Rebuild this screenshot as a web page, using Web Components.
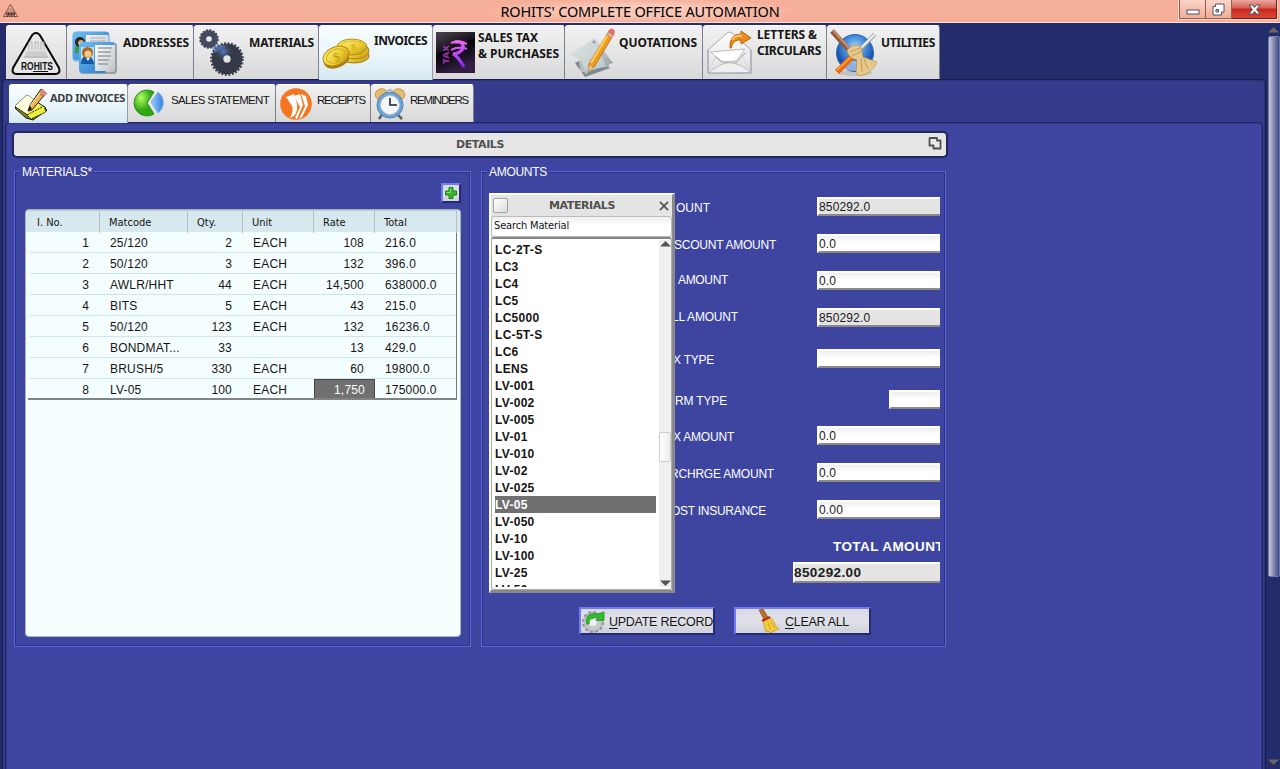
<!DOCTYPE html>
<html lang="en"><head><meta charset="utf-8"><title>ROHITS' COMPLETE OFFICE AUTOMATION</title>
<style>html,body{margin:0;width:1280px;height:769px;overflow:hidden;background:#252c6c}*{box-sizing:border-box}</style></head>
<body><office-app></office-app>
<script>
const ARIAL='"Liberation Sans",Arial,sans-serif', NOTO='"Noto Sans","Open Sans",sans-serif', VERD='"DejaVu Sans",sans-serif', COND='"DejaVu Sans Condensed","DejaVu Sans",sans-serif';
function define(name,css,html,init){
  customElements.define(name,class extends HTMLElement{
    connectedCallback(){
      if(!this.shadowRoot){
        const r=this.attachShadow({mode:'open'});
        r.innerHTML='<style>*{box-sizing:border-box}:host{display:block;box-sizing:border-box}'+css+'</style>'+(typeof html==='function'?html(this):html);
      }
      if(init)init(this);
    }
  });
}
/* A one-line label whose tracking adapts to the width attribute. */
define('ui-text',':host{white-space:pre;flex:none;height:16px;line-height:16px}span{display:inline-block}i{font-style:normal;text-decoration:underline;text-underline-offset:2px}',
 el=>{const t=el.getAttribute('text');return '<span>'+(el.hasAttribute('mnemonic')?'<i>'+t[0]+'</i>'+t.slice(1):t.replace(/&/g,'&amp;'))+'</span>'},
 el=>{
  const f={a:ARIAL,n:NOTO,v:VERD,c:COND}[el.getAttribute('f')||'a'];
  el.style.font=(el.getAttribute('b')||'400')+' '+(el.getAttribute('s')||12)+'px/16px '+f;
  const s=el.shadowRoot.querySelector('span'),w=+el.getAttribute('w');
  if(w){el.style.width=w+'px';const n=el.getAttribute('text').length;s.style.letterSpacing=((w-s.getBoundingClientRect().width)/n).toFixed(3)+'px';}
 });
const ICONS={
logo:[60,54,`<path d="M30 7Q33 7 35 11L53 42Q55 48 49 48H11Q5 48 7 42L25 11Q27 7 30 7Z" fill="#e6e6e6" stroke="#080808" stroke-width="2"/><path d="M21 25H39L43 32H17Z" fill="#cdcdcd"/><path d="M23 24V16H26V24M29 24V16H32V24M35 24V16H38V24" fill="none" stroke="#b4b4b4"/><path d="M18 31H42" stroke="#b5b5b5"/><path d="M27 45.500H42" stroke="#111"/><text x="15" y="44" font-family="Liberation Sans" font-weight="bold" font-size="10.500" textLength="32" lengthAdjust="spacingAndGlyphs" fill="#111">ROHITS</text>`],
mini:[17,16,`<path d="M8.500 1.500L15.500 13.500H1.500Z" fill="#f0b49d" stroke="#57362e" stroke-dasharray="2 .6"/><path d="M6 6H11M5 8H12" stroke="#a9796c"/><path d="M4 11H13" stroke="#422" stroke-width="3"/><path d="M5 10V12M8 10V12M11 10V12" stroke="#e8ae9b" stroke-width=".8"/>`],
cards:[48,48,`<defs><linearGradient id="g" x2="1" y2="1"><stop stop-color="#70bdf2"/><stop offset="1" stop-color="#2476cf"/></linearGradient><linearGradient id="h" x2="1" y2="1"><stop stop-color="#fff"/><stop offset="1" stop-color="#bfc3c8"/></linearGradient></defs><rect x="2" y="4" width="36" height="29" rx="3" fill="url(#h)" stroke="#5aa3de"/><path d="M2 8Q2 4 6 4H35Q38 4 38 7H15V32H5Q2 32 2 29Z" fill="url(#g)"/><path d="M4 20Q8 9 13 19V25H4Z" fill="#3b9c45"/><circle cx="9" cy="14" r="5" fill="#282522"/><circle cx="10" cy="15" r="3" fill="#dfaa62"/><path d="M19 10H34M19 13H34" stroke="#aab"/><rect x="9" y="15" width="37" height="31" rx="3" fill="#9b9fa4"/><rect x="8" y="14" width="36" height="30" rx="3" fill="url(#h)"/><path d="M8 17Q8 14 11 14H42Q44 14 44 17H24V41H36L34 45H11Q8 45 8 41Z" fill="url(#g)"/><path d="M24 17H43V36L36 43H24Z" fill="url(#h)"/><rect x="10" y="19" width="13" height="17" fill="#b9dcf2"/><path d="M10 36Q10 28 16 28T23 36Z" fill="#155ca8"/><path d="M14 28L17 33 20 28" fill="#fff"/><circle cx="16.500" cy="24.500" r="5.500" fill="#ad6a1c"/><circle cx="17" cy="26" r="3.500" fill="#f6c789"/><path d="M27 20H41M27 24H40M27 28H40M27 32H38M27 36H37" stroke="#9a9da0" stroke-width="1.600"/>`],
gears:[48,50,`<defs><radialGradient id="b" cx=".3" cy=".1"><stop stop-color="#5577c8"/><stop offset=".6" stop-color="#3e4557"/><stop offset="1" stop-color="#353a48"/></radialGradient></defs><circle cx="10" cy="11" r="8.500" fill="none" stroke="#3d4252" stroke-width="2.500" stroke-dasharray="2 1.340"/><circle cx="10" cy="11" r="5.800" fill="none" stroke="#454b5e" stroke-width="6"/><circle cx="28" cy="31" r="15.500" fill="none" stroke="#3d4250" stroke-width="2.600" stroke-dasharray="2 1.480"/><circle cx="28" cy="31" r="9.400" fill="none" stroke="url(#b)" stroke-width="11.500"/><path d="M13 20Q20 15 27 18L16 25Z" fill="#5b7cc6" opacity=".65"/>`],
coins:[50,34,`<defs><linearGradient id="c" x2="1" y2="1"><stop stop-color="#fff67b"/><stop offset=".6" stop-color="#edc92c"/><stop offset="1" stop-color="#b88d17"/></linearGradient></defs><path d="M18 13V21Q31 31 48 21V12Z" fill="#c29518"/><ellipse cx="33" cy="19" rx="15" ry="7" fill="url(#c)" stroke="#a87c12"/><ellipse cx="34" cy="14" rx="14" ry="8" fill="url(#c)" stroke="#ad8419"/><ellipse cx="31" cy="10" rx="15" ry="8" fill="url(#c)" stroke="#b18b1b"/><ellipse cx="31" cy="9.500" rx="11.500" ry="5.500" fill="none" stroke="#d9b82a"/><path d="M3 21Q1 28 7 31Q19 34 28 23V16Z" fill="#a97b13"/><ellipse cx="15" cy="19" rx="13.500" ry="9" transform="rotate(-24 15 19)" fill="url(#c)" stroke="#b68b19"/><ellipse cx="15" cy="19" rx="10" ry="6.500" transform="rotate(-24 15 19)" fill="none" stroke="#d5b123"/><text x="12" y="24" font-family="Liberation Serif" font-size="12" fill="#b99018" transform="rotate(-20 15 19)">$</text><text x="30" y="13" font-family="Liberation Serif" font-size="9" fill="#c6a226">$</text>`],
tax:[40,42,`<defs><linearGradient id="t" x2=".4" y2="1"><stop stop-color="#4b474f"/><stop offset=".45" stop-color="#19131f"/><stop offset=".5" stop-color="#050307"/><stop offset="1" stop-color="#351f43"/></linearGradient><linearGradient id="p" gradientUnits="userSpaceOnUse" x1="20" y1="8" x2="26" y2="36"><stop stop-color="#f56af3"/><stop offset="1" stop-color="#7a24ef"/></linearGradient></defs><path d="M0 0H39V41H0Z" fill="url(#t)"/><path d="M15 11Q24 8 31 12M15 18Q23 14 31 17" fill="none" stroke="url(#p)" stroke-width="2.200"/><path d="M19 10Q28 9 27 15Q26 21 17 22Q22 24 28 35" fill="none" stroke="url(#p)" stroke-width="3.400"/><text x="-32" y="13" transform="rotate(-90)" font-family="Noto Sans" font-size="9" textLength="19" lengthAdjust="spacingAndGlyphs" font-weight="bold" fill="#a535b4">TAX</text>`],
quote:[50,50,`<defs><linearGradient id="q" x2="1" y2="1"><stop stop-color="#f5f7f8"/><stop offset="1" stop-color="#8f9c9f"/></linearGradient></defs><path d="M33 22L46 35 39 36 43 40 18 49 8 35Z" fill="#7d8a8e"/><path d="M2 26L28 10 44 33 41 39Q24 40 18 47Q18 31 2 26Z" fill="url(#q)"/><path d="M2 26Q14 28 13 45L39 38 28 12Z" fill="#d2dada" opacity=".65"/><path d="M42 3L47 6 27 39 21 43 22 36Z" fill="#f39a1a" stroke="#a86519" stroke-width=".8"/><path d="M40 8L24 35" stroke="#ffd05c" stroke-width="2"/><path d="M42 2Q46-2 48 4L46 8 40 5Z" fill="#ed6e67"/><path d="M40 5L46 9" stroke="#bcc4c5" stroke-width="2"/><path d="M22 37L21 43 26 40Z" fill="#e8c58e"/><circle cx="27" cy="14" r="1.500" fill="#8f9da8"/>`],
mail:[46,46,`<defs><linearGradient id="m" x2="0" y2="1"><stop stop-color="#fff"/><stop offset="1" stop-color="#dcdee0"/></linearGradient></defs><path d="M1 20L20 3Q22 1 25 3L44 20V43H1Z" fill="url(#m)" stroke="#a5a9ae"/><path d="M1 21L10 25 1 42M44 20L35 26 44 42" fill="none" stroke="#d5d8db"/><path d="M4 22L38 19 29 31 14 32Z" fill="#fff" stroke="#bbb"/><path d="M8 26L17 33H29L38 23" fill="none" stroke="#a5a9ae"/><path d="M2 43Q22 23 43 42" fill="#eee" stroke="#bbb"/><path d="M1 20V43H44V20" fill="none" stroke="#a5a9ae"/><path d="M23 18Q22 4 34 4V1L44 8 34 14V10Q26 9 24 18Z" fill="#ee8b1b" stroke="#bd6308"/><path d="M25 10Q28 5 35 6" stroke="#ffc46b" fill="none" stroke-width="2"/>`],
utils:[48,48,`<defs><radialGradient id="u" cx=".5" cy=".35"><stop stop-color="#a8d6ff"/><stop offset=".55" stop-color="#4d92dd"/><stop offset="1" stop-color="#1b54b0"/></radialGradient></defs><ellipse cx="25" cy="45" rx="17" ry="3" fill="#aaa" opacity=".5"/><circle cx="25" cy="25" r="18.500" fill="url(#u)" stroke="#2b67b8"/><ellipse cx="25" cy="38" rx="14" ry="5" fill="#dceeff" opacity=".6"/><path d="M45 6L29 23" stroke="#99a0a9" stroke-width="4"/><path d="M46 5L29 22" stroke="#f1f2f4" stroke-width="2"/><path d="M22 29L7 44" stroke="#e56a10" stroke-width="6"/><path d="M21 29L7 42" stroke="#ff9b3a" stroke-width="2"/><path d="M2 3L20 23" stroke="#8e5a42" stroke-width="5"/><path d="M3 2L19 20" stroke="#c18c6f" stroke-width="2.500"/><path d="M17 22Q25 14 31 19L33 29 47 34Q42 46 29 48L26 45 27 32Q18 30 17 22Z" fill="#e7c98c" stroke="#b5904b" stroke-width=".7"/><path d="M31 30L32 44M34 31L38 41M20 24L30 20M22 28L32 23" stroke="#c29c5c"/>`],
add:[34,34,`<path d="M1 20L13 8 33 22 19 32 12 30Z" fill="#827f10" stroke="#16180a"/><path d="M1 18L13 7 32 20 18 30Z" fill="#f3ef58" stroke="#111"/><path d="M1 18L13 7 21 12 13 26Z" fill="#fffde0"/><path d="M13 27L30 18 32 24 17 31Z" fill="#eff03b" stroke="#222" stroke-dasharray="2 1"/><path d="M27 1L32 5 18 22 14 23 16 17Z" fill="#eeb556" stroke="#27251b"/><path d="M27 2L32 7" stroke="#d98a80" stroke-width="4"/><path d="M25 5L30 9" stroke="#8e4a3a" stroke-width="1"/><path d="M26 5L16 18" stroke="#fff0a6"/><path d="M14 23L16 18 18 21Z" fill="#111"/>`],
pie:[32,28,`<defs><radialGradient id="i" cx=".35" cy=".3"><stop stop-color="#b4ff65"/><stop offset="1" stop-color="#31a712"/></radialGradient><linearGradient id="j"><stop stop-color="#9bcdff"/><stop offset="1" stop-color="#377ee0"/></linearGradient></defs><path d="M14 14L21 3A13 13 0 1 0 21 25Z" fill="url(#i)" stroke="#278b16"/><path d="M18 13L25 3A13 13 0 0 1 25 24Z" fill="url(#j)" stroke="#7fb4e8"/>`],
receipt:[32,32,`<circle cx="16" cy="16" r="15.800" fill="#f47621"/><path d="M6 9L14 6 17 16Q18 23 14 28L10 30Q14 22 12 18ZM14 8L20 6 23 17 17 31 15 30 20 19ZM21 6L26 8 28 17 22 29 19 31 25 18Z" fill="#fff"/>`],
clock:[32,32,`<path d="M9 25L5 31M22 25L28 31" stroke="#5b625f" stroke-width="2.500"/><ellipse cx="7" cy="6" rx="6" ry="5" transform="rotate(-25 7 6)" fill="#e5bd6c" stroke="#c39a4c"/><ellipse cx="25" cy="6" rx="6" ry="5" transform="rotate(25 25 6)" fill="#e5bd6c" stroke="#c39a4c"/><path d="M13 3Q16 0 19 3" fill="none" stroke="#888"/><circle cx="16" cy="17" r="13" fill="#6ea3d3" stroke="#5383b3"/><circle cx="16" cy="17" r="9.500" fill="#f4f7f9" stroke="#b2c6d6"/><path d="M16 10V17H23" fill="none" stroke="#222" stroke-width="1.600"/>`],
plus:[12,12,`<path d="M4 .5H8V4H11.500V8H8V11.500H4V8H.5V4H4Z" fill="#35b929" stroke="#14811a"/><path d="M5.500 1.500V5.500H1.500" fill="none" stroke="#80e36b"/>`],
pop:[14,13,`<path d="M2 1H9V3.500H12.500V11.500H5.500V8.500H1.500V1.500Z" fill="#e8e8e8" stroke="#505050" stroke-width="1.800" stroke-linejoin="round"/>`],
update:[26,26,`<circle cx="12.500" cy="13.500" r="10" fill="none" stroke="#8e9195" stroke-width="3" stroke-dasharray="3 2.236"/><circle cx="12.500" cy="13.500" r="7" fill="none" stroke="#c6c8cc" stroke-width="5"/><circle cx="12.500" cy="13.500" r="9.500" fill="none" stroke="#a3a5a9" stroke-width=".8"/><path d="M6 16Q3 3 18 5L24 3V12H15L18 9Q10 8 9 15Z" fill="#34b82e" stroke="#148c1d" stroke-width=".7"/><circle cx="12.500" cy="14" r="3.500" fill="#f0f0f4"/>`],
broom:[22,24,`<path d="M1 1L5 0 11 10 7 12Z" fill="#b97422" stroke="#78430d" stroke-width=".6"/><path d="M5 12L12 8 16 13Q17 17 21 20Q18 20 17 22Q15 21 13 24L10 22 8 23Z" fill="#f4cd3d" stroke="#bd8d16" stroke-width=".7"/><path d="M4 12L12 8" stroke="#c12a25" stroke-width="2.500"/><path d="M10 14L13 21M13 13L17 19" stroke="#cda024"/>`],
x:[11,11,`<path d="M1 1L10 10M10 1L1 10" stroke="#505050" stroke-width="1.800"/>`],
up:[11,7,`<path d="M0 6.500L5.500 1 11 6.500Z" fill="currentColor"/>`],
down:[11,7,`<path d="M0 .5L5.500 6 11 .5Z" fill="currentColor"/>`],
min:[14,7,`<rect x="1" y="1" width="12" height="4" fill="#fff" stroke="#505266"/>`],
restore:[13,13,`<path d="M3.500 1H12V9H9.500V12H1V3.500H3.500Z" fill="#fff" stroke="#505266"/><path d="M4 6.500H6.500V9H4Z" fill="#f5ae98" stroke="#505266"/>`],
close:[13,11,`<path d="M1 1H4.500L6.500 3.500 8.500 1H12L8.500 5.500 12 10H8.500L6.500 7.500 4.500 10H1L4.500 5.500Z" fill="#fff" stroke="#505266"/>`]
};
define('ui-icon',':host{flex:none}svg{display:block}',el=>{const i=ICONS[el.getAttribute('name')];return `<svg width="${el.getAttribute('w')||i[0]}" height="${el.getAttribute('h')||i[1]}" viewBox="0 0 ${i[0]} ${i[1]}" preserveAspectRatio="none">${i[2]}</svg>`});

define('title-bar',`:host{height:23px;display:grid;grid-template-columns:1fr auto 1fr;background:#f5ae98;border-bottom:1px solid #fbe2d8}ui-icon.m{margin:3px 0 0 2px}.t{padding:4px 24px 0;margin-top:-1px;background:radial-gradient(ellipse at center,#f9c8b8 30%,#f5ae98 72%)}
.c{justify-self:end;display:flex;width:100px;height:20px;margin-right:2px;border:1px solid #fadcd2;border-top:0;gap:0}.c div{display:flex;justify-content:center;border:1px solid #9b5a4b;border-top:0;background:linear-gradient(#fbd5c9,#f2ab96)}.a{width:27px;padding-top:9px}.b{width:26px;border-left:0!important;padding-top:3px}.x{flex:1;border-color:#7d1a14!important;background:linear-gradient(#e8a99f,#d75d50 45%,#c9251b 50%,#d84738)!important;padding-top:4px;border-left:0!important}`,
`<ui-icon class="m" name="mini"></ui-icon><div class="t"><ui-text f="n" s="14.500" w="279" text="ROHITS' COMPLETE OFFICE AUTOMATION"></ui-text></div><div class="c"><div class="a"><ui-icon name="min"></ui-icon></div><div class="b"><ui-icon name="restore"></ui-icon></div><div class="x"><ui-icon name="close"></ui-icon></div></div>`);

define('tool-tab',`:host{display:flex;flex:none;height:54px;background:linear-gradient(#f1f1f1,#e5e5e5 50%,#d9d9d9);border-right:1px solid #7d7f8e;border-top:1px solid #fff;border-radius:3px 3px 0 0;color:#151515}:host([on]){background:linear-gradient(#f6fdff,#eaf6fb 55%,#d6e9f0);border-right-color:#99a}:host([small]){height:38px}:host([on][small]){height:39px}:host([on]:not([small])){height:55px}`,'<slot></slot>',el=>{el.style.width=el.getAttribute('w')+'px'});

const T=(w,inner,extra='')=>`<tool-tab w="${w}" ${extra}>${inner}</tool-tab>`;
const I=(n,l,t,w,h)=>`<ui-icon name="${n}" style="margin:${t}px 0 0 ${l}px" ${w?`w="${w}" h="${h}"`:''}></ui-icon>`;
const L=(t,w,l,top,a='f="n" b="700"',c='')=>`<ui-text ${a} text="${t}" w="${w}" style="margin:${top}px 0 0 ${l}px;${c}"></ui-text>`;
define('main-tabs',':host{display:flex;height:54px;padding-left:6px;margin-top:2px}',
 T(61,I('logo',0,0))+T(127,I('cards',4,2)+L('ADDRESSES',66,4,9))+T(125,I('gears',5,2)+L('MATERIALS',65,2,9))+T(114,I('coins',2,11)+L('INVOICES',53,3,7),'on')+
 T(132,I('tax',3,6)+`<div>${L('SALES TAX',60,2,4)}${L('&amp; PURCHASES',81,2,0)}</div>`)+T(138,I('quote',2,2)+L('QUOTATIONS',78,2,9))+
 T(124,I('mail',4,4)+`<div>${L('LETTERS &amp;',60,4,1)}${L('CIRCULARS',64,4,0)}</div>`)+T(113,I('utils',3,2)+L('UTILITIES',54,3,9)));
define('sub-tabs',':host{display:flex;height:38px;padding-left:4px}',
 T(119,I('add',5,3)+L('ADD INVOICES',75,2,5,'f="n" b="700" s="11"','color:#3c3c3c'),'small on')+T(148,I('pie',5,4)+L('SALES STATEMENT',98,6,7,'s="11.500"'),'small')+
 T(95,I('receipt',4,3)+L('RECEIPTS',48,5,7,'s="11.500"'),'small')+T(103,I('clock',3,3)+L('REMINDERS',58,4,7,'s="11.500"'),'small'));

define('group-box',':host{border:1px solid #5a63e4;box-shadow:inset 1px 1px 0 #2c337f,inset -1px -1px 0 #2c337f;color:#fff}','<slot name="legend"></slot><slot></slot>');
define('group-title',':host{width:max-content;margin:-9px 0 0 5px;padding:1px 2px 0;background:#3d45a1;height:16px}','<slot></slot>');

const rows=[['1','25/120','2','EACH','108','216.0'],['2','50/120','3','EACH','132','396.0'],['3','AWLR/HHT','44','EACH','14,500','638000.0'],['4','BITS','5','EACH','43','215.0'],['5','50/120','123','EACH','132','16236.0'],['6','BONDMAT...','33','','13','429.0'],['7','BRUSH/5','330','EACH','60','19800.0'],['8','LV-05','100','EACH','1,750','175000.0']];
define('material-table',`:host{width:436px;height:428px;margin:6px 0 0 10px;background:#f5feff;border:1px solid #a9b4bd;border-radius:4px;color:#151515;overflow:hidden;font:12px/22px ${ARIAL}}
.g{display:grid;grid-template-columns:71px 88px 55px 71px 61px 82px}.h{height:22px;background:#d8e8ef;width:434px;padding-left:3px;font:11px/23px ${COND};border-top:1px solid #c0cbd0}
.h div{border-right:1px solid #b8bfc2;padding-left:9px;height:22px}.h div:first-child{padding-left:8px}.b{width:429px;margin-left:2px;border-right:1px solid #777;border-bottom:2px solid #808485;height:168px;overflow:hidden}.r{margin-left:2px;width:426px;height:21px;border-bottom:1px solid #cfe4ec;letter-spacing:.2px;grid-template-columns:69px 88px 55px 71px 61px 1fr}.r div{height:20px;padding-left:11px}.r .n{text-align:right;padding:0 10px 0 0}.s{background:#707070;color:#fff;border:1px solid #464646;line-height:20px;padding-right:9px!important;margin-right:-1px;margin-left:1px}`,
 '<div class="g h">'+['I. No.','Matcode','Qty.','Unit','Rate','Total'].map(x=>`<div>${x}</div>`).join('')+'</div><div class="b">'+rows.map((r,i)=>'<div class="g r">'+r.map((c,j)=>`<div class="${[0,2,4].includes(j)?'n':''}${i==7&&j==4?' s':''}">${c}</div>`).join('')+'</div>').join('')+'</div>');

define('text-field',`:host{height:19px;width:123px;background:linear-gradient(#eee,#fff 45%);border-top:2px solid #fff;border-left:2px solid #fff;border-bottom:2px solid #8b8b86;color:#202020;font:12px/17px ${ARIAL};letter-spacing:.15px;flex:none}:host([ro]){background:#e4e4e4;}:host([wide]){width:147px;height:21px;font:bold 13.500px/17px ${ARIAL};letter-spacing:.4px;text-indent:-1px}`,'<slot></slot>');
define('form-row',':host{display:flex;justify-content:space-between;height:19px}','<slot></slot>');

/* gap above, label, label width, label x, label drop, value, attributes */
const F=[[18,'OUNT',34,676,3,'850292.0','ro'],[18,'SCOUNT AMOUNT',102,674,3,'0.0',''],[18,'AMOUNT',50,678,1,'0.0',''],[18,'LL AMOUNT',66,672,1,'850292.0','ro'],[22,'X TYPE',41,673,3,'',''],[22,'RM TYPE',52,675,3,'','style="width:51px"'],[17,'X AMOUNT',61,673,3,'0.0',''],[18,'RCHRGE AMOUNT',104,670,3,'0.0',''],[18,'OST INSURANCE',95,671,3,'0.00','']];
const items='LC-2T-S LC3 LC4 LC5 LC5000 LC-5T-S LC6 LENS LV-001 LV-002 LV-005 LV-01 LV-010 LV-02 LV-025 LV-05 LV-050 LV-10 LV-100 LV-25 LV-50'.split(' ');
define('material-picker',`:host{width:186px;height:400px;background:#e4e4e4;border:2px solid #fff;border-right:3px solid #8a8a8a;border-bottom:3px solid #8a8a8a;color:#151515}
.t{display:flex;height:21px;align-items:center;color:#505050}.k{width:15px;height:15px;border:1px solid #a2a2a2;border-radius:2px;background:linear-gradient(135deg,#fff,#ddd);margin-left:2px}
.q{height:21px;background:linear-gradient(#f0f0f0,#fff 50%);padding:1px 0 0 2px;border:1px solid #bbb;border-radius:3px}.l{display:flex;justify-content:space-between;height:353px;background:#fff;border:1px solid #aaa;border-top:2px solid #858585;border-radius:3px;padding-top:1px;overflow:hidden}
.items{width:161px;height:346px;overflow:hidden;margin:1px 0 0 3px;font:bold 12px/18px ${ARIAL};letter-spacing:.3px}.items div{height:17px}.items .s{background:#707070;color:#fff}.bar{width:12px;height:347px;background:#f0f0f0;display:flex;flex-direction:column;align-items:center;color:#555}.th{width:12px;height:30px;background:linear-gradient(90deg,#fff,#ececec);border:1px solid #ccc;border-radius:2px;margin:185px 0 auto}`,
`<div class="t"><div class="k"></div><ui-text f="v" b="700" s="11" w="66" text="MATERIALS" style="margin-left:41px"></ui-text><ui-icon name="x" w="10" h="10" style="margin-left:44px"></ui-icon></div><div class="q"><ui-text f="c" s="11" w="75" text="Search Material"></ui-text></div><div class="l"><div class="items">${items.map((x,i)=>`<div class="${i==15?'s':''}">${x}</div>`).join('')}</div><div class="bar"><ui-icon name="up"></ui-icon><div class="th"></div><ui-icon name="down"></ui-icon></div></div>`);
define('push-button',':host{display:flex;flex:none;height:28px;background:linear-gradient(#d9dae6,#e0e1e8 50%,#cfd0da);border:2px solid #6f7cf5;border-right-color:#242b73;border-bottom-color:#242b73;color:#151515}','<slot></slot>');
define('amounts-form',`:host{position:relative;height:466px;margin-left:1px}.f{padding:0 5px 0 0;width:462px}material-picker{position:absolute;left:6px;top:-4px}.tot{display:flex;flex-direction:column;align-items:flex-end;margin-top:20px}.clip{width:107px;overflow:hidden;height:16px;margin-bottom:7px}.btns{display:flex;margin:24px 0 0 96px;gap:19px}`,
 '<div class="f">'+F.map(f=>`<form-row style="margin-top:${f[0]}px"><ui-text text="${f[1]}" w="${f[2]}" style="margin:${f[4]}px 0 0 ${f[3]-483}px"></ui-text><text-field ${f[6]}>${f[5]}</text-field></form-row>`).join('')+
 `<div class="tot"><div class="clip"><ui-text b="700" s="13.500" w="111" text="TOTAL AMOUNT"></ui-text></div><text-field ro wide>850292.00</text-field></div></div>
 <div class="btns"><push-button style="width:136px"><ui-icon name="update" w="25" h="25"></ui-icon><ui-text text="UPDATE RECORD" mnemonic w="104" s="12.500" style="margin:5px 0 0 3px"></ui-text></push-button><push-button style="width:137px"><ui-icon name="broom" style="margin-left:22px"></ui-icon><ui-text text="CLEAR ALL" mnemonic w="64" s="12.500" style="margin:5px 0 0 5px"></ui-text></push-button></div><material-picker></material-picker>`);
define('details-bar',':host{display:flex;width:936px;height:27px;background:#e6e6e6;border:2px solid #20265f;border-radius:5px;color:#505050;margin:8px 0 0 6px;padding-top:4px}','<ui-text f="v" b="700" s="11" w="48" text="DETAILS" style="margin-left:442px"></ui-text><ui-icon name="pop" style="margin:0 0 0 424px"></ui-icon>');
define('window-scroll',':host{width:13px;height:745px;display:flex;flex-direction:column;align-items:center;justify-content:space-between;color:#686760;padding:3px 0 2px}.t{width:12px;height:541px;border-radius:2px;background:linear-gradient(90deg,#c5c8dc,#a5a9c6 25%,#525b94 85%,#394176);border:1px solid #7079ad;margin:3px 0 auto}','<ui-icon name="up"></ui-icon><div class="t"></div><ui-icon name="down"></ui-icon>');
define('office-app',`:host{width:1280px;height:769px;overflow:hidden;background:#252c6c}.w{display:flex;height:746px;justify-content:space-between}.m{width:1265px}.p1{height:700px;margin-left:2px;width:1264px;border:1px solid #191e50;border-bottom:0;border-radius:4px;background:#343c8b;padding:4px 2px 0;box-shadow:inset 0 1px #2c3378,inset -1px 0 #2c3378}
main-tabs,sub-tabs{position:relative;z-index:1}.p2{height:660px;width:1258px;border:1px solid #20265f;border-radius:4px;background:#3d45a1;box-shadow:inset 1px 1px #333b91,inset -1px 0 #333b91}.cols{display:flex;gap:10px;margin:13px 0 0 8px}.cols group-box{height:476px}`,
`<title-bar></title-bar><div class="w"><div class="m"><main-tabs></main-tabs><div class="p1"><sub-tabs></sub-tabs><div class="p2"><details-bar></details-bar><div class="cols"><group-box style="width:457px"><group-title slot="legend"><ui-text text="MATERIALS*" w="70"></ui-text></group-title><push-button style="width:20px;height:20px;margin:4px 0 0 426px;padding:2px"><ui-icon name="plus"></ui-icon></push-button><material-table></material-table></group-box><group-box style="width:465px"><group-title slot="legend"><ui-text text="AMOUNTS" w="58"></ui-text></group-title><amounts-form></amounts-form></group-box></div></div></div></div><window-scroll></window-scroll></div>`);
</script></body></html>
